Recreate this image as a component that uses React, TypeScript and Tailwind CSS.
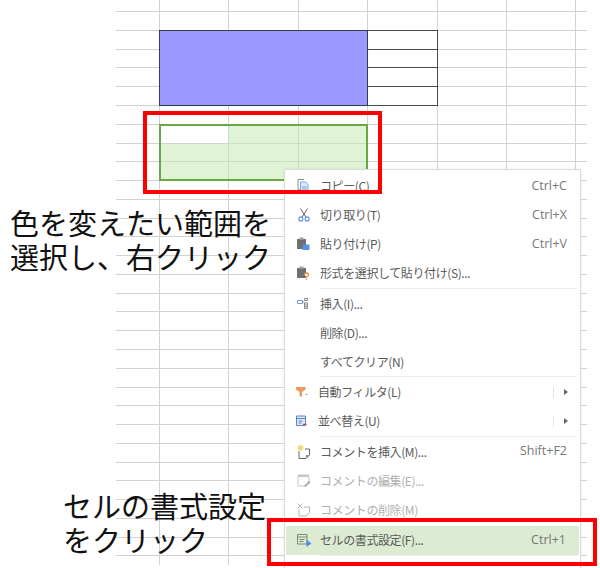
import React from "react"

const rowIds = Array.from({ length: 31 }, (_, i) => i)
const colIds = Array.from({ length: 8 }, (_, i) => i)

type Item = {
  label: string
  shortcut?: string
  icon?: React.ReactNode
  disabled?: boolean
  submenu?: boolean
  active?: boolean
  tight?: boolean
  sepAfter?: boolean
  gapAfter?: boolean
}

const Ico = ({ children }: { children: React.ReactNode }) => (
  <svg width="16" height="16" viewBox="0 0 16 16" fill="none" className="block">
    {children}
  </svg>
)

const items: Item[] = [
  {
    label: "コピー(C)",
    shortcut: "Ctrl+C",
    icon: (
      <Ico>
        <path d="M5 11.500H2V1.500h6" stroke="#8d8d8d" />
        <path d="M4.500 4h5l2.500 2.500v8H4.500z" fill="#dce8fb" stroke="#7ba4e8" />
        <path d="M6 9h4.500M6 11h4.500" stroke="#7ba4e8" />
      </Ico>
    ),
  },
  {
    label: "切り取り(T)",
    shortcut: "Ctrl+X",
    icon: (
      <Ico>
        <path d="M4.500 1.500l5.500 9M11.500 1.500L6 10.500" stroke="#666" />
        <circle cx="4.800" cy="12" r="2" stroke="#6f9be6" strokeWidth="1.300" />
        <circle cx="11.200" cy="12" r="2" stroke="#6f9be6" strokeWidth="1.300" />
      </Ico>
    ),
  },
  {
    label: "貼り付け(P)",
    shortcut: "Ctrl+V",
    icon: (
      <Ico>
        <path d="M1 3h9v10H1z" fill="#6f6f6f" />
        <path d="M3.500 1.500h4v2.500h-4z" fill="#9a9a9a" />
        <path d="M6.500 8.500h7V14h-7z" fill="#5b8fe6" />
      </Ico>
    ),
  },
  {
    label: "形式を選択して貼り付け(S)...",
    sepAfter: true,
    icon: (
      <Ico>
        <path d="M1 3h9v10H1z" fill="#6f6f6f" />
        <path d="M3.500 1.500h4v2.500h-4z" fill="#9a9a9a" />
        <path d="M8.500 9.500c.5-2 4-2 4 0 0 1.500-2 1.500-2 3" fill="#fff" stroke="#e8903c" strokeWidth="1.500" />
        <path d="M10.500 13.500V15" stroke="#e8903c" strokeWidth="1.500" />
      </Ico>
    ),
  },
  {
    label: "挿入(I)...",
    icon: (
      <Ico>
        <path d="M1.500 4.500h5v3h-5z" stroke="#6f9be6" />
        <path d="M8.500 2.500h3v2h-3zM8.500 7h3v5.500h-3z" stroke="#8a8a8a" />
        <path d="M8.500 9h3M8.500 10.800h3M6.500 6h2" stroke="#8a8a8a" />
      </Ico>
    ),
  },
  { label: "削除(D)..." },
  { label: "すべてクリア(N)", sepAfter: true },
  {
    label: "自動フィルタ(L)",
    submenu: true,
    tight: true,
    icon: (
      <Ico>
        <path d="M1 3h9.500v2.500L7 8v4.500H4.500V8L1 5.500z" fill="#ee9a5c" />
        <path d="M10.500 10.500h2" stroke="#999" />
      </Ico>
    ),
  },
  {
    label: "並べ替え(U)",
    submenu: true,
    tight: true,
    sepAfter: true,
    icon: (
      <Ico>
        <path d="M1.500 3h9v9.500h-9z" fill="#dfe8f8" stroke="#5b82c8" />
        <path d="M1.500 5.500h9M3.500 8h4M3.500 10h3" stroke="#5b82c8" />
        <path d="M8 11.500h3.500" stroke="#d9403a" strokeWidth="1.500" />
      </Ico>
    ),
  },
  {
    label: "コメントを挿入(M)...",
    shortcut: "Shift+F2",
    icon: (
      <Ico>
        <path d="M3 7v7.500h7l3.500-3.500V5H9" stroke="#666" />
        <path d="M10 11v3.500L13.500 11z" fill="#888" />
        <circle cx="4.500" cy="3.800" r="2.800" fill="#f6d878" />
      </Ico>
    ),
  },
  {
    label: "コメントの編集(E)...",
    disabled: true,
    icon: (
      <Ico>
        <path d="M2 1.500h11v2H2z" fill="#c6c6c6" />
        <path d="M2 3.500h11v6l-3 3.500H2z" stroke="#c6c6c6" />
        <path d="M8 13l5-5 1.500 1.500-5 4.500z" fill="#a6a6a6" />
      </Ico>
    ),
  },
  {
    label: "コメントの削除(M)",
    disabled: true,
    gapAfter: true,
    icon: (
      <Ico>
        <path d="M3 7v7h7l3.500-3.500V5H8" stroke="#b5b5b5" />
        <path d="M1.500 1.500l5 5M6.500 1.500l-5 5" stroke="#b5b5b5" />
      </Ico>
    ),
  },
  {
    label: "セルの書式設定(F)...",
    shortcut: "Ctrl+1",
    active: true,
    sepAfter: true,
    icon: (
      <Ico>
        <path d="M1.500 2.500h9.500v9.500H1.500z" stroke="#7c8a76" />
        <path d="M1.500 5h9.500M3.500 7.500h5M3.500 9.500h4" stroke="#7c8a76" />
        <path d="M10.500 7.500l5 4-5 3.500z" fill="#4f8fe8" />
      </Ico>
    ),
  },
]

export default function App() {
  return (
    <div className="relative w-[600px] h-[568px] overflow-hidden bg-white font-['Noto_Sans_CJK_JP',sans-serif]">
      {/* sheet */}
      <div className="ml-[116px] w-[471px] grid grid-cols-[44px_repeat(6,69.4px)_11px] grid-rows-[12.2px_repeat(29,18.78px)_8.5px]">
        {rowIds.map((r) =>
          colIds.map((c) => (
            <div
              key={`${r}-${c}`}
              style={{ gridRow: r + 1, gridColumn: c + 1 }}
              className={`border-[#d2d2d2] ${c < 7 ? "border-r" : ""} ${r < 30 ? "border-b" : ""}`}
            />
          ))
        )}

        {/* blue block */}
        <div className="col-start-2 col-span-3 row-start-3 row-span-4 -ml-px -mt-px bg-[#9999ff] border border-[#3a3a4a]" />

        {/* table on the right */}
        <div className="col-start-5 row-start-3 -mt-px border-t border-r border-b border-[#4a4a4a]" />
        <div className="col-start-5 row-start-4 border-r border-b border-[#4a4a4a]" />
        <div className="col-start-5 row-start-5 border-r border-b border-[#4a4a4a]" />
        <div className="col-start-5 row-start-6 border-r border-b border-[#4a4a4a]" />

        {/* selection */}
        <div className="col-start-2 col-span-3 row-start-8 row-span-3 -ml-px -mt-px border-2 border-[#68a845] grid grid-cols-3 grid-rows-3">
          <div />
          <div className="col-span-2 bg-[#c4e8ab]/50" />
          <div className="col-span-3 row-span-2 bg-[#c4e8ab]/50" />
        </div>
      </div>

      {/* context menu */}
      <div className="absolute left-[284px] top-[169px] w-[297px] h-[400px] bg-white border border-[#dadada] pt-[1.5px] shadow-[0_0_3px_rgba(0,0,0,0.08)]">
        {items.map((item) => (
          <React.Fragment key={item.label}>
            <div className={`flex items-center h-[29px] pr-[13px] ${item.active ? "bg-[#dcebd2] mx-px" : ""}`}>
              <div className={`shrink-0 ${item.active ? "w-[34px] pl-[10px]" : item.tight ? "w-[33px] pl-[10px]" : "w-[35px] pl-[11px]"}`}>
                {item.icon}
              </div>
              <span
                className={`text-[12px] tracking-[-0.4px] whitespace-nowrap ${
                  item.disabled ? "text-[#b0b0b0]" : "text-[#5a5a5a]"
                }`}
              >
                {item.label}
              </span>
              {item.shortcut && (
                <span className="ml-auto font-['Open_Sans',sans-serif] text-[12.5px] text-[#777]">{item.shortcut}</span>
              )}
              {item.submenu && (
                <div className="ml-auto flex items-center h-[11px]">
                  <div className="w-px h-full bg-[#e4e4e4] mr-[10px]" />
                  <div className="w-0 h-0 border-y-[3px] border-y-transparent border-l-[4px] border-l-[#666] -mr-[1px]" />
                </div>
              )}
            </div>
            {(item.sepAfter || item.gapAfter) && (
              <div className="h-[1.5px] flex items-center pl-[35px] pr-[3px]">
                {item.sepAfter && <div className="w-full h-px shrink-0 bg-[#ececec]" />}
              </div>
            )}
          </React.Fragment>
        ))}
      </div>

      {/* annotations */}
      <p className="absolute left-[10px] top-[205px] text-[29px] leading-[34px] text-[#111] whitespace-nowrap">
        色を変えたい範囲を
        <br />
        選択し、右クリック
      </p>
      <p className="absolute left-[63px] top-[488px] text-[29px] leading-[34px] text-[#111] whitespace-nowrap">
        セルの書式設定
        <br />
        をクリック
      </p>

      {/* red frames */}
      <div className="absolute left-[143px] top-[111px] w-[239px] h-[83px] border-4 border-[#ff0000]" />
      <div className="absolute left-[267px] top-[518px] w-[330px] h-[48px] border-4 border-[#ff0000]" />
    </div>
  )
}
